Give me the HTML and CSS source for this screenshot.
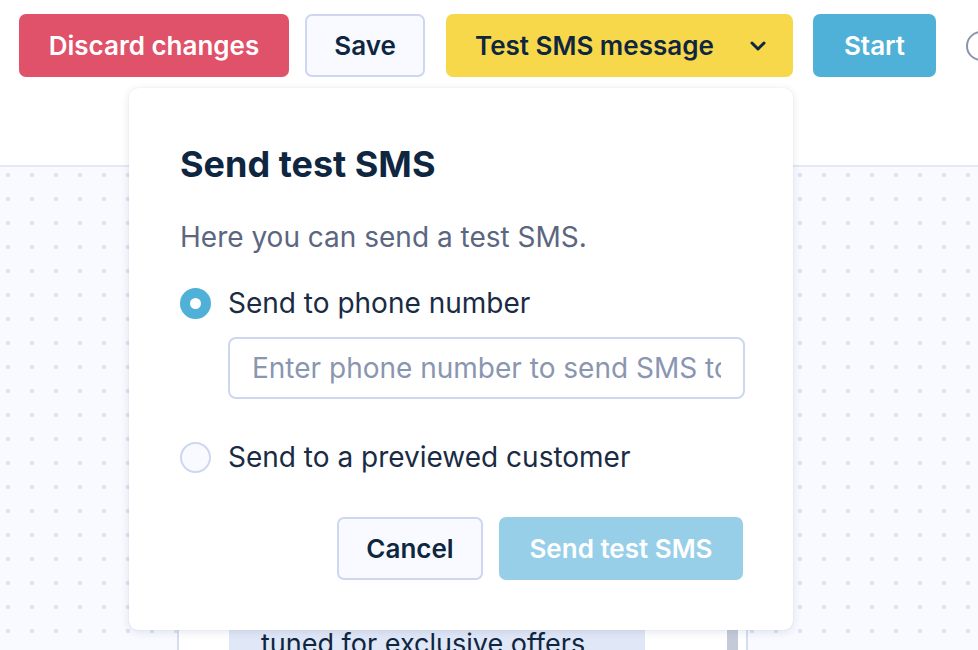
FILE: index.html
```html
<!DOCTYPE html>
<html>
<head>
<meta charset="utf-8">
<link rel="stylesheet" href="styles.css">
</head>
<body>
<div class="page">
  <header class="topbar">
    <div class="toolbar">
      <button class="btn btn-danger">Discard changes</button>
      <button class="btn btn-outline btn-save">Save</button>
      <button class="btn btn-yellow">
        <span>Test SMS message</span>
        <svg class="chev" width="18" height="12" viewBox="0 0 18 12"><path d="M3 3 L9 9 L15 3" fill="none" stroke="#0f2640" stroke-width="3" stroke-linecap="round" stroke-linejoin="round"/></svg>
      </button>
      <button class="btn btn-blue">Start</button>
      <span class="help-circle"></span>
    </div>
  </header>
  <main class="canvas">
    <div class="card">
      <div class="card-inner">
        <div class="highlight">tuned for exclusive offers</div>
      </div>
      <div class="scrollbar"></div>
    </div>
  </main>

  <div class="modal">
    <h2 class="modal-title">Send test SMS</h2>
    <p class="modal-desc">Here you can send a test SMS.</p>
    <label class="radio-row">
      <span class="radio radio-on"></span>
      <span class="radio-label">Send to phone number</span>
    </label>
    <div class="input-wrap">
      <div class="input"><span class="placeholder">Enter phone number to send SMS to</span></div>
    </div>
    <label class="radio-row radio-row-2">
      <span class="radio"></span>
      <span class="radio-label">Send to a previewed customer</span>
    </label>
    <div class="modal-actions">
      <button class="btn btn-outline btn-cancel">Cancel</button>
      <button class="btn btn-disabled">Send test SMS</button>
    </div>
  </div>
</div>
</body>
</html>
```

FILE: styles.css
```css
* { box-sizing: border-box; }
html, body {
  margin: 0;
  padding: 0;
  width: 978px;
  height: 650px;
  overflow: hidden;
  font-family: "Inter", "Noto Sans", sans-serif;
  color: #0f2640;
}
.page {
  position: relative;
  width: 978px;
  height: 650px;
  display: flex;
  flex-direction: column;
  overflow: hidden;
}
.topbar {
  height: 167px;
  background: #ffffff;
  border-bottom: 2px solid #e3e8f6;
  flex: none;
}
.toolbar {
  display: flex;
  align-items: center;
  padding: 14px 0 0 19px;
  white-space: nowrap;
}
.btn {
  font-family: inherit;
  font-size: 26px;
  font-weight: 600;
  height: 63px;
  border: none;
  border-radius: 7px;
  padding: 0;
  display: inline-flex;
  align-items: center;
  justify-content: center;
  flex: none;
  cursor: pointer;
}
.btn-danger {
  background: #e0516a;
  color: #ffffff;
  width: 270px;
}
.btn-outline {
  background: #f8faff;
  border: 2px solid #cdd7ef;
  color: #0f2640;
}
.btn-save {
  margin-left: 16px;
  width: 120px;
}
.btn-yellow {
  margin-left: 21px;
  width: 347px;
  background: #f7d84a;
  color: #0f2640;
  justify-content: space-between;
  padding: 0 26px 0 29px;
}
.chev { display: block; }
.btn-blue {
  margin-left: 20px;
  width: 123px;
  background: #4fb0d8;
  color: #ffffff;
}
.help-circle {
  margin-left: 30px;
  width: 30px;
  height: 30px;
  border: 2.5px solid #8a94ab;
  border-radius: 50%;
  flex: none;
}
.canvas {
  flex: 1;
  position: relative;
  background-color: #f8faff;
  background-image: radial-gradient(circle, #dde3f3 2px, transparent 2.5px);
  background-size: 24px 24px;
  background-position: -4px -4px;
}
.card {
  position: absolute;
  left: 177px;
  top: 430px;
  width: 571px;
  height: 120px;
  background: #ffffff;
  border: 2px solid #d6ddf0;
  border-radius: 6px;
  display: flex;
}
.card-inner {
  flex: 1;
  padding: 28px 0 0 50px;
}
.highlight {
  width: 416px;
  background: #e0e7f7;
  padding: 0 0 0 32px;
  font-size: 27px;
  line-height: 34px;
  color: #0f2640;
  white-space: nowrap;
}
.scrollbar {
  width: 11px;
  margin: 0 8px 0 0;
  background: #c4cad8;
}
.modal {
  position: absolute;
  left: 129px;
  top: 88px;
  width: 664px;
  height: 542px;
  background: #ffffff;
  border-radius: 9px;
  box-shadow: 0 2px 8px rgba(30, 50, 90, 0.12), 0 0 1px rgba(30, 50, 90, 0.15);
  padding: 56px 48px 0 51px;
  display: flex;
  flex-direction: column;
}
.modal-title {
  margin: 0;
  font-size: 36px;
  font-weight: 700;
  line-height: 40px;
  color: #0f2640;
}
.modal-desc {
  margin: 36px 0 0 0;
  font-size: 28px;
  line-height: 34px;
  color: #5b6680;
}
.radio-row {
  display: flex;
  align-items: center;
  gap: 17px;
  margin-top: 32px;
  height: 34px;
}
.radio-row-2 { margin-top: 41px; }
.radio {
  width: 31px;
  height: 31px;
  border-radius: 50%;
  border: 2px solid #cdd7ef;
  background: #f8faff;
  flex: none;
}
.radio-on {
  border: 10px solid #4fb0d8;
  background: #ffffff;
}
.radio-label {
  font-size: 28px;
  line-height: 34px;
  color: #1a2b44;
  white-space: nowrap;
}
.input-wrap {
  padding-left: 48px;
  margin-top: 17px;
}
.input {
  height: 62px;
  border: 2px solid #cdd7ef;
  border-radius: 8px;
  padding: 0 22px 0 22px;
  display: flex;
  align-items: center;
}
.placeholder {
  display: block;
  flex: 1;
  min-width: 0;
  overflow: hidden;
  white-space: nowrap;
  font-size: 28px;
  line-height: 58px;
  color: #8a96b0;
}
.modal-actions {
  display: flex;
  justify-content: flex-end;
  gap: 16px;
  margin-top: 43px;
  margin-right: 2px;
}
.btn-cancel {
  width: 146px;
  height: 63px;
}
.btn-disabled {
  width: 244px;
  height: 63px;
  background: #97cfe8;
  color: #ffffff;
}
```
